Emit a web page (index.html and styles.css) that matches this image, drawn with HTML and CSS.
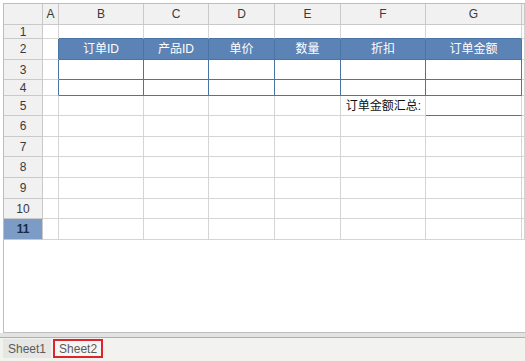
FILE: index.html
```html
<!DOCTYPE html>
<html lang="zh-CN">
<head>
  <meta charset="UTF-8" />
  <title>Sheet2</title>
  <link rel="stylesheet" href="styles.css">
</head>
<body>
  <div class="book">
    <div class="sheet">
      <!-- column headers -->
      <div class="c ch"></div>
      <div class="c ch">A</div>
      <div class="c ch">B</div>
      <div class="c ch">C</div>
      <div class="c ch">D</div>
      <div class="c ch">E</div>
      <div class="c ch">F</div>
      <div class="c ch">G</div>
      <div class="c ch"></div>
      <!-- row 1 -->
      <div class="c rh">1</div>
      <div class="c"></div>
      <div class="c bb"></div>
      <div class="c bb"></div>
      <div class="c bb"></div>
      <div class="c bb"></div>
      <div class="c bb"></div>
      <div class="c bb"></div>
      <div class="c"></div>
      <!-- row 2 -->
      <div class="c rh">2</div>
      <div class="c br"></div>
      <div class="c tb th">订单ID</div>
      <div class="c tb th">产品ID</div>
      <div class="c tb th">单价</div>
      <div class="c tb th">数量</div>
      <div class="c tb th">折扣</div>
      <div class="c tb th">订单金额</div>
      <div class="c"></div>
      <!-- row 3 -->
      <div class="c rh">3</div>
      <div class="c br"></div>
      <div class="c tb"></div>
      <div class="c tb"></div>
      <div class="c tb"></div>
      <div class="c tb"></div>
      <div class="c tb"></div>
      <div class="c tb"></div>
      <div class="c"></div>
      <!-- row 4 -->
      <div class="c rh">4</div>
      <div class="c br"></div>
      <div class="c tb"></div>
      <div class="c tb"></div>
      <div class="c tb"></div>
      <div class="c tb"></div>
      <div class="c tb"></div>
      <div class="c tb"></div>
      <div class="c"></div>
      <!-- row 5 -->
      <div class="c rh">5</div>
      <div class="c"></div>
      <div class="c"></div>
      <div class="c"></div>
      <div class="c"></div>
      <div class="c"></div>
      <div class="c label">订单金额汇总:</div>
      <div class="c bb"></div>
      <div class="c"></div>
      <!-- row 6 -->
      <div class="c rh">6</div>
      <div class="c"></div><div class="c"></div><div class="c"></div><div class="c"></div>
      <div class="c"></div><div class="c"></div><div class="c"></div><div class="c"></div>
      <!-- row 7 -->
      <div class="c rh">7</div>
      <div class="c"></div><div class="c"></div><div class="c"></div><div class="c"></div>
      <div class="c"></div><div class="c"></div><div class="c"></div><div class="c"></div>
      <!-- row 8 -->
      <div class="c rh">8</div>
      <div class="c"></div><div class="c"></div><div class="c"></div><div class="c"></div>
      <div class="c"></div><div class="c"></div><div class="c"></div><div class="c"></div>
      <!-- row 9 -->
      <div class="c rh">9</div>
      <div class="c"></div><div class="c"></div><div class="c"></div><div class="c"></div>
      <div class="c"></div><div class="c"></div><div class="c"></div><div class="c"></div>
      <!-- row 10 -->
      <div class="c rh">10</div>
      <div class="c"></div><div class="c"></div><div class="c"></div><div class="c"></div>
      <div class="c"></div><div class="c"></div><div class="c"></div><div class="c"></div>
      <!-- row 11 (selected) -->
      <div class="c rh sel">11</div>
      <div class="c"></div><div class="c"></div><div class="c"></div><div class="c"></div>
      <div class="c"></div><div class="c"></div><div class="c"></div><div class="c"></div>
    </div>
  </div>
  <div class="hscroll"></div>
  <div class="tabs">
    <span class="tab">Sheet1</span>
    <span class="tab active">Sheet2</span>
  </div>
</body>
</html>
```

FILE: styles.css
```css
* { box-sizing: border-box; margin: 0; padding: 0; }
body {
  width: 525px;
  height: 361px;
  overflow: hidden;
  background: #fff;
  font-family: 'Liberation Sans', 'Noto Sans CJK SC', sans-serif;
  font-size: 12px;
  color: #222;
}
.book {
  margin: 3px 0 0 3px;
  width: 522px;
  height: 330px;
  border: 1px solid #bdbdbd;
  border-right: none;
  overflow: hidden;
  background: #fff;
}
.sheet {
  display: grid;
  grid-template-columns: 39px 16px 85px 65px 66px 66px 85px 96px 1fr;
  grid-template-rows: 21px 14px 21px 20px 16px 20px 21px 20px 21px 21px 20px 21px;
}
.c {
  border-right: 1px solid #d5d5d5;
  border-bottom: 1px solid #d5d5d5;
  display: flex;
  align-items: center;
  justify-content: center;
  white-space: nowrap;
  line-height: 1;
}
.ch {
  background: #f1f1f1;
  border-color: #c9c9c9;
  color: #3a3a3a;
}
.rh {
  background: #f1f1f1;
  border-color: #c9c9c9;
  color: #3a3a3a;
}
.rh.sel {
  background: #7c9cc6;
  color: #1b2b44;
  font-weight: bold;
}
.bb { border-bottom-color: #4a73a6; }
.br { border-right-color: #4a73a6; }
.tb {
  border-right-color: #4a73a6;
  border-bottom-color: #4a73a6;
}
.th {
  background: #5c83b5;
  color: #fff;
}
.label {
  justify-content: flex-end;
  padding-right: 4px;
  color: #111;
}
.hscroll {
  width: 525px;
  height: 5px;
  background: #e3e3e3;
  border-bottom: 1px solid #a8b0b9;
}
.tabs {
  display: flex;
  gap: 2px;
  width: 525px;
  height: 23px;
  padding: 1px 0 0 3px;
  background: #f2f2ef;
}
.tab {
  display: flex;
  align-items: center;
  height: 19px;
  padding: 0 5px;
  background: #e6e6e4;
  color: #5a5a5a;
}
.tab.active {
  background: #f6f6f4;
  border: 2px solid #e0242c;
  padding: 0 4px;
}
```
